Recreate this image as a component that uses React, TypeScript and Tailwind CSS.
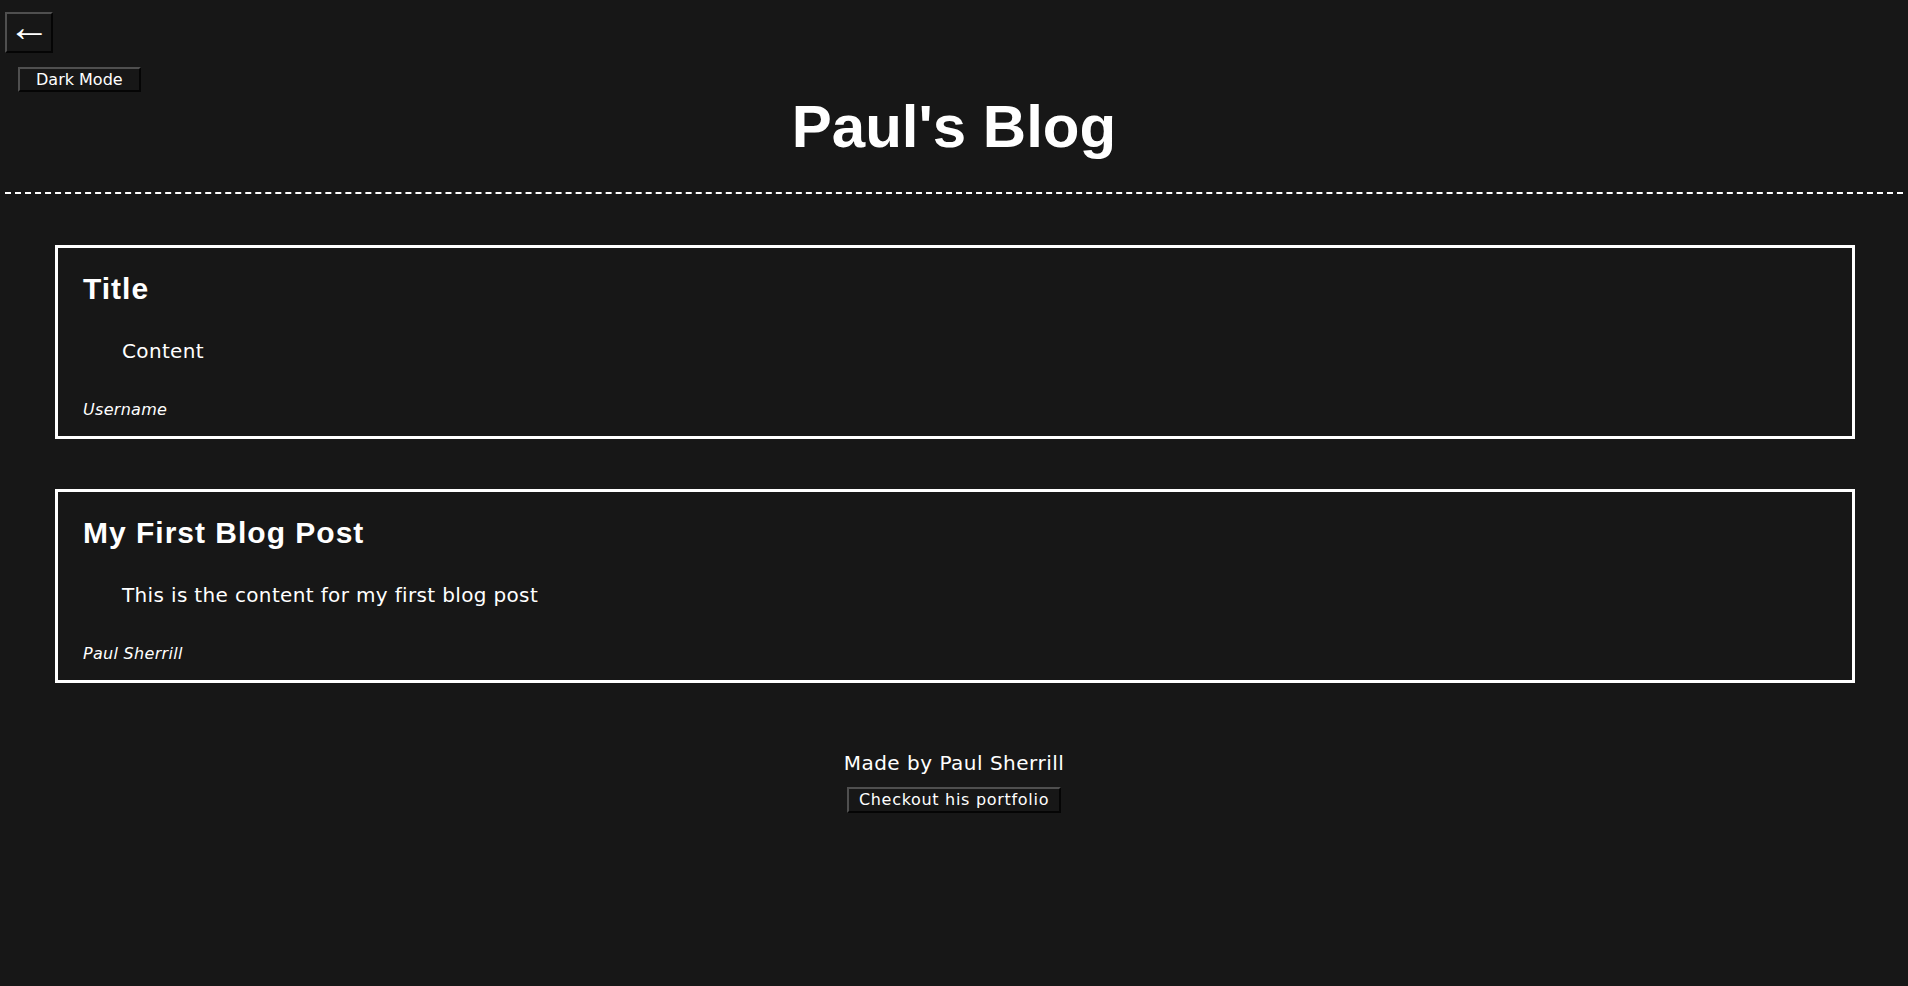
const posts = [
  { title: "Title", content: "Content", user: "Username" },
  {
    title: "My First Blog Post",
    content: "This is the content for my first blog post",
    user: "Paul Sherrill",
  },
];

const body = "font-['DejaVu_Sans',sans-serif]";
const heading = "font-['Liberation_Sans',Arial,sans-serif]";
const btn =
  "border-2 border-t-[#4f4f4f] border-l-[#4f4f4f] border-r-[#050505] border-b-[#050505] bg-[#171717] text-white";

const Post = ({ title, content, user }: { title: string; content: string; user: string }) => (
  <article className="border-[3px] border-white px-[25px] pt-[23px] pb-[16px]">
    <h2 className={`${heading} text-[30px] leading-[36px] font-bold tracking-[1px]`}>{title}</h2>
    <p className={`${body} mt-[32px] pl-[39px] text-[20px] leading-[24px] tracking-[0.35px]`}>
      {content}
    </p>
    <p className={`${body} mt-[37px] text-[16px] leading-[20px] italic tracking-[0.3px]`}>{user}</p>
  </article>
);

export default function App() {
  return (
    <div className="min-h-[986px] bg-[#171717] text-white">
      <header className="pt-[12px]">
        <button
          className={`${btn} ${heading} ml-[5px] flex h-[41px] w-[48px] items-center justify-center pb-[12px] text-[42px] leading-none`}
        >
          ←
        </button>
        <button
          className={`${btn} ${body} mt-[14px] ml-[18px] block h-[25px] px-4 text-[16px] leading-[19px]`}
        >
          Dark Mode
        </button>
        <h1 className={`${heading} mt-[5px] text-center text-[60px] leading-[60px] font-bold`}>
          Paul's Blog
        </h1>
        <div className="mx-[5px] mt-[35px] border-t-2 border-dashed border-white" />
      </header>

      <main className="mt-[51px] ml-[55px] mr-[53px] flex flex-col gap-[50px]">
        {posts.map((p) => (
          <Post key={p.title} {...p} />
        ))}
      </main>

      <footer className={`${body} mt-[68px] flex flex-col items-center`}>
        <p className="text-[20px] leading-[24px] tracking-[0.5px]">Made by Paul Sherrill</p>
        <button className={`${btn} mt-[12px] h-[26px] px-2.5 text-[16px] leading-[20px] tracking-[0.7px]`}>
          Checkout his portfolio
        </button>
      </footer>
    </div>
  );
}
